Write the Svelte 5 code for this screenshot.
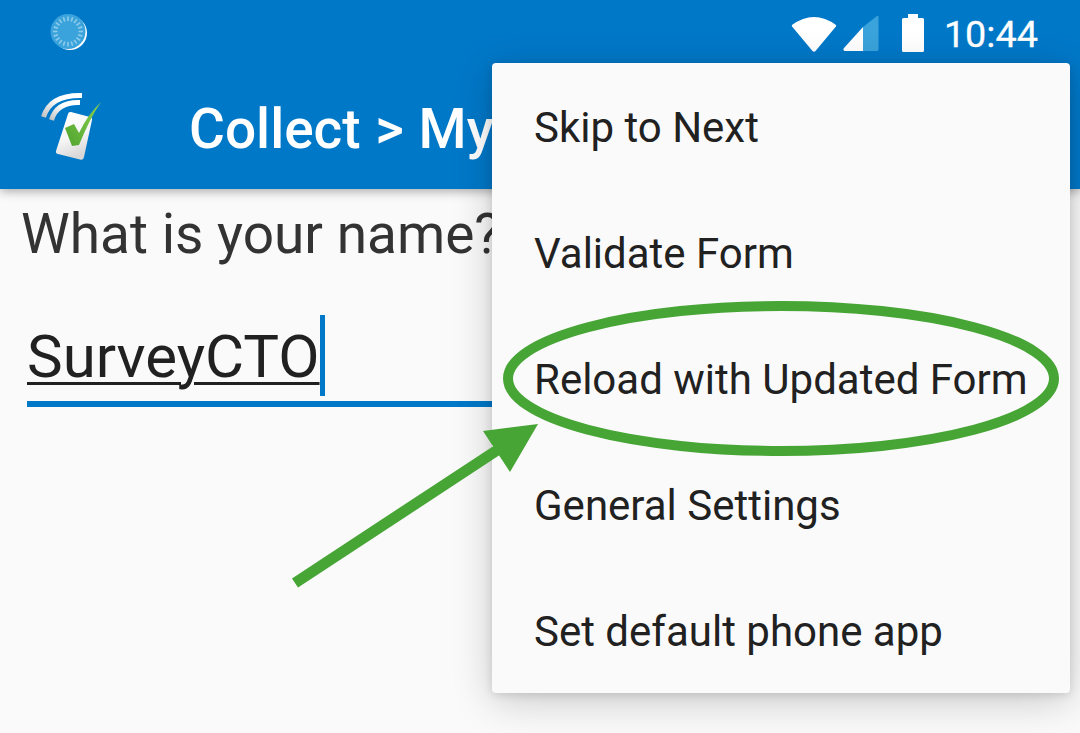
<script lang="ts">
  const menuItems = [
    'Skip to Next',
    'Validate Form',
    'Reload with Updated Form',
    'General Settings',
    'Set default phone app',
  ];
  const ticks = Array.from({ length: 20 }, (_, i) => i * 18);
</script>

<div class="screen">
  <header class="appbar">
    <div class="statusbar">
      <svg class="spinner" viewBox="0 0 40 40" width="40" height="40" aria-hidden="true">
        <circle cx="21" cy="21" r="17" fill="#fff" />
        <circle cx="19" cy="19.500" r="17.500" fill="#3aa3db" />
        {#each ticks as a}
          <line x1="19" y1="4.500" x2="19" y2="9" stroke="#8fcbea" stroke-width="1.600" transform={`rotate(${a} 19 19.500)`} />
        {/each}
      </svg>
      <div class="status-right">
        <svg class="wifi" viewBox="0 0 46 38" width="46" height="38" aria-hidden="true">
          <path d="M1 10 Q23 -6 45 10 Q45.500 11 44.500 12 L24.500 36 Q23 37.500 21.500 36 L1.500 12 Q0.500 11 1 10Z" fill="#fff" />
        </svg>
        <svg class="signal" viewBox="0 0 36 36" width="36" height="36" aria-hidden="true">
          <path d="M20 11 L34 0 Q35.500 -0.500 35.500 1.500 L35.500 33 Q35.500 35 33.500 35 L20 35Z" fill="#3aa3db" />
          <path d="M20 11 L20 35 L1.500 35 Q-0.500 34 1 32Z" fill="#fff" />
        </svg>
        <svg class="battery" viewBox="0 0 22 38" width="22" height="38" aria-hidden="true">
          <path d="M6 0 H16 V4 H20.500 Q22 4 22 5.500 V36.500 Q22 38 20.500 38 H1.500 Q0 38 0 36.500 V5.500 Q0 4 1.500 4 H6Z" fill="#fff" />
        </svg>
        <span class="clock">10:44</span>
      </div>
    </div>
    <div class="toolbar">
      <svg class="logo" viewBox="0 0 64 72" width="64" height="72" aria-hidden="true">
        <defs>
          <linearGradient id="card" x1="0" y1="0" x2="0.300" y2="1">
            <stop offset="0" stop-color="#ffffff" />
            <stop offset="0.600" stop-color="#f6f6f6" />
            <stop offset="1" stop-color="#d8d8d8" />
          </linearGradient>
          <linearGradient id="arc" x1="0" y1="1" x2="1" y2="0">
            <stop offset="0" stop-color="#c4c4c4" />
            <stop offset="0.600" stop-color="#ffffff" />
          </linearGradient>
          <linearGradient id="tick" x1="0" y1="1" x2="1" y2="0">
            <stop offset="0" stop-color="#4fa32f" />
            <stop offset="1" stop-color="#8ad24f" />
          </linearGradient>
        </defs>
        <path d="M3.500 25 C8 10 22 3 42 3.500" fill="none" stroke="url(#arc)" stroke-width="5" />
        <path d="M11.500 28 C15 16 25 10 40 10.500" fill="none" stroke="url(#arc)" stroke-width="5" />
        <path d="M28 22 Q28.500 19.500 31 20 L50 25 Q52.500 25.500 52 28 L44 65 Q43.500 68.500 40 67.500 L18 62 Q15.500 61.500 16 59Z" fill="url(#card)" />
        <path d="M25 36 L34 32 L39 41 Q48 22 61 10 Q50 26 39 53 L32 54Z" fill="url(#tick)" />
      </svg>
      <span class="title">Collect &gt; My</span>
    </div>
  </header>

  <main class="form">
    <p class="question">What is your name?</p>
    <div class="answer">
      <span class="value">SurveyCTO</span><span class="caret"></span>
    </div>
  </main>

  <ul class="menu">
    {#each menuItems as item}
      <li>{item}</li>
    {/each}
  </ul>

  <svg class="annotation" viewBox="0 0 1080 733" width="1080" height="733" aria-hidden="true">
    <ellipse cx="781" cy="378.500" rx="273" ry="72.500" fill="none" stroke="#46a535" stroke-width="10" />
    <path d="M295 583 L505 445" stroke="#46a535" stroke-width="11" fill="none" />
    <path d="M483 431 L538 424 L510 472Z" fill="#46a535" />
  </svg>
</div>

<style>
  :global(body) {
    margin: 0;
    background: #fafafa;
  }
  .screen {
    position: relative;
    width: 1080px;
    height: 733px;
    overflow: hidden;
    background: #fafafa;
    font-family: Roboto, "Liberation Sans", sans-serif;
  }
  .appbar {
    height: 189px;
    display: flex;
    flex-direction: column;
    background: #0078c8;
    box-shadow: 0 2px 10px rgba(0, 0, 0, 0.35);
  }
  .statusbar {
    height: 64px;
    display: flex;
    align-items: center;
    justify-content: space-between;
    padding: 0 42px 0 49px;
  }
  .status-right {
    display: flex;
    align-items: center;
  }
  .wifi {
    margin-right: 6px;
    margin-top: 3px;
  }
  .signal {
    margin-right: 23px;
    margin-top: 4px;
  }
  .battery {
    margin-right: 20px;
    margin-top: 2px;
  }
  .clock {
    color: #fff;
    font-size: 37.800px;
    line-height: 40px;
    margin-top: 3px;
    -webkit-text-stroke: 0.3px #fff;
  }
  .toolbar {
    flex: 1;
    display: flex;
    align-items: center;
    padding-left: 40px;
  }
  .logo {
    margin-top: 3px;
  }
  .title {
    margin-left: 85px;
    margin-top: 4px;
    color: #fff;
    font-size: 55px;
    font-weight: 500;
    word-spacing: 1px;
    white-space: nowrap;
  }
  .form {
    padding: 0 0 0 22px;
  }
  .question {
    margin: 14px 0 0 -1px;
    color: #333;
    font-size: 55px;
    line-height: 62px;
    white-space: nowrap;
  }
  .answer {
    display: flex;
    align-items: flex-start;
    width: 700px;
    margin: 50px 0 0 5px;
    height: 86px;
    border-bottom: 6px solid #0078c8;
  }
  .value {
    color: #212121;
    font-size: 60px;
    line-height: 84px;
    text-decoration: underline;
    text-decoration-thickness: 3px;
    text-underline-offset: 5px;
  }
  .caret {
    width: 5px;
    height: 81px;
    background: #0078c8;
  }
  .menu {
    position: absolute;
    left: 492px;
    top: 63px;
    width: 578px;
    height: 630px;
    margin: 0;
    padding: 0;
    list-style: none;
    display: flex;
    flex-direction: column;
    background: #fafafa;
    border-radius: 4px;
    box-shadow: 0 8px 40px rgba(0, 0, 0, 0.2), 0 2px 10px rgba(0, 0, 0, 0.12);
  }
  .menu li {
    height: 126px;
    display: flex;
    align-items: center;
    padding: 2px 0 0 42px;
    box-sizing: border-box;
    color: #212121;
    font-size: 42px;
  }
  .annotation {
    position: absolute;
    left: 0;
    top: 0;
    pointer-events: none;
  }
</style>
